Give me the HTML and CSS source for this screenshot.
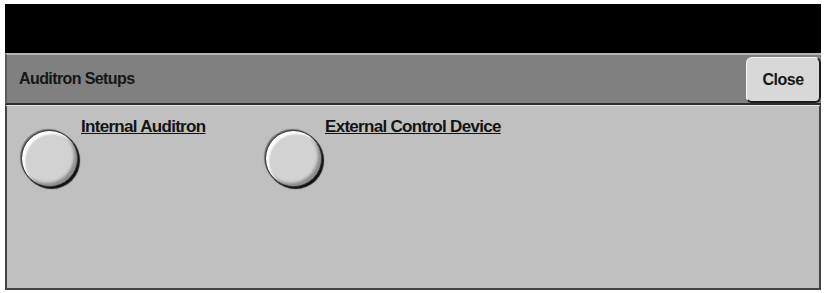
FILE: index.html
```html
<!DOCTYPE html>
<html>
<head>
<meta charset="utf-8">
<link rel="stylesheet" href="styles.css">
</head>
<body>
<div class="screen">
  <div class="titlebar"></div>
  <div class="header">
    <span class="title">Auditron Setups</span>
    <button class="close">Close</button>
  </div>
  <div class="panel">
    <div class="options">
      <div class="option">
        <span class="radio"></span>
        <span class="label">Internal Auditron</span>
      </div>
      <div class="option">
        <span class="radio"></span>
        <span class="label">External Control Device</span>
      </div>
    </div>
  </div>
</div>
</body>
</html>
```
FILE: styles.css
```css
html, body {
  margin: 0;
  background: #ffffff;
}
body {
  font-family: "Liberation Sans", Arial, sans-serif;
}
.screen {
  margin: 4px 0 0 5px;
  width: 816px;
}
.titlebar {
  height: 49px;
  background: #000000;
}
.header {
  display: flex;
  justify-content: space-between;
  align-items: stretch;
  height: 48px;
  background: #808080;
  border-top: 2px solid #b4b4b4;
  border-bottom: 2px solid #2e2e2e;
  border-left: 2px solid #5a5a5a;
}
.title {
  align-self: center;
  margin-left: 12px;
  font-size: 16px;
  letter-spacing: -0.6px;
  font-weight: bold;
  color: #161616;
}
.close {
  align-self: flex-end;
  width: 75px;
  height: 46px;
  margin-right: 0;
  padding: 0;
  background: #d8d8d8;
  border-style: solid;
  border-width: 1px 2px 2px 1px;
  border-color: #f4f4f4 #1c1c1c #1c1c1c #f4f4f4;
  border-radius: 6px;
  font-family: "Liberation Sans", Arial, sans-serif;
  font-size: 16px;
  letter-spacing: -0.5px;
  font-weight: bold;
  color: #161616;
}
.panel {
  height: 182px;
  background: #c0c0c0;
  border-top: 1px solid #e6e6e6;
  border-left: 2px solid #444444;
  border-right: 2px solid #444444;
  border-bottom: 2px solid #444444;
}
.options {
  display: grid;
  grid-template-columns: 244px auto;
  padding: 11px 0 0 14px;
}
.option {
  display: flex;
  align-items: flex-start;
}
.radio {
  flex: none;
  width: 57px;
  height: 57px;
  margin-top: 13px;
  border-radius: 50%;
  box-sizing: border-box;
  background: #d2d2d2;
  border: 1px solid #3a3a3a;
  box-shadow:
    inset 3px 3px 2px #ffffff,
    inset -3px -3px 3px #8c8c8c,
    2px 2px 1px #111111,
    -1px -1px 1px #6a6a6a;
}
.label {
  margin-left: 3px;
  line-height: 19px;
  font-size: 17px;
  letter-spacing: -0.7px;
  font-weight: bold;
  color: #141414;
  text-decoration: underline;
  text-decoration-thickness: 1px;
}
```
